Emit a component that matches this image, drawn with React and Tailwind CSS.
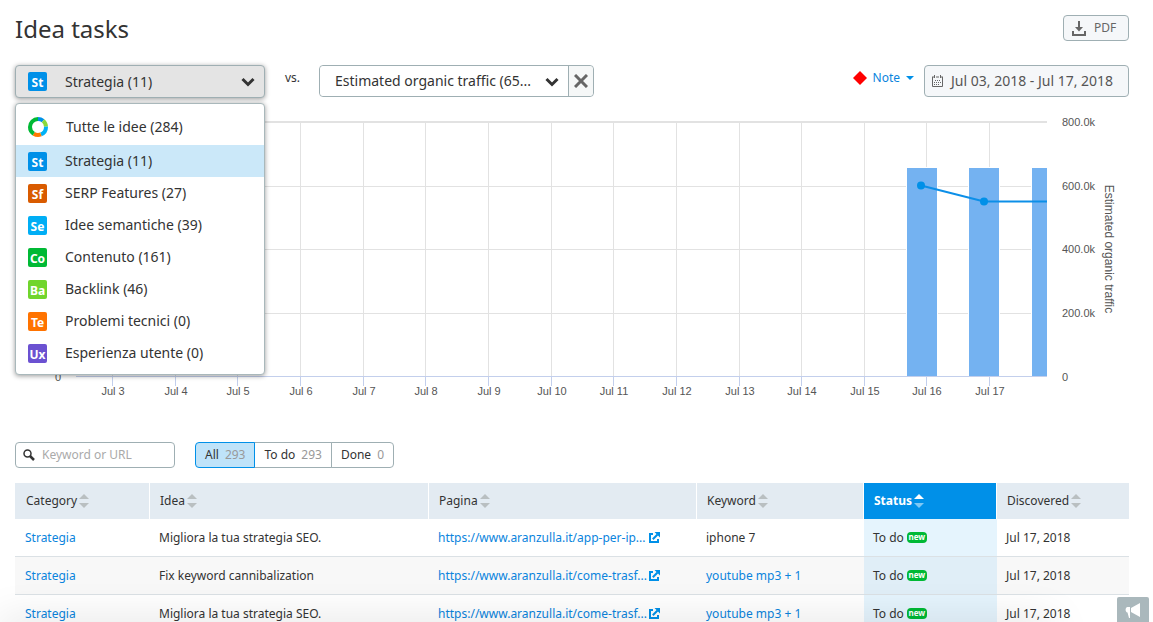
import React, { useState } from "react";

const categories = [
    { code: "St", label: "Strategia (11)", color: "bg-[#0090e8]" },
    { code: "Sf", label: "SERP Features (27)", color: "bg-[#d95b00]" },
    { code: "Se", label: "Idee semantiche (39)", color: "bg-[#00aef5]" },
    { code: "Co", label: "Contenuto (161)", color: "bg-[#00b935]" },
    { code: "Ba", label: "Backlink (46)", color: "bg-[#70d52c]" },
    { code: "Te", label: "Problemi tecnici (0)", color: "bg-[#ff7300]" },
    { code: "Ux", label: "Esperienza utente (0)", color: "bg-[#6b51d1]" },
];

const filters = [
    { label: "All", count: 293 },
    { label: "To do", count: 293 },
    { label: "Done", count: 0 },
];

const columns = [
    { label: "Category", width: "w-[135px]" },
    { label: "Idea", width: "w-[279px]" },
    { label: "Pagina", width: "" },
    { label: "Keyword", width: "w-[167px]" },
    { label: "Status", width: "w-[133px]" },
    { label: "Discovered", width: "w-[132px]" },
];

const rows = [
    { idea: "Migliora la tua strategia SEO.", page: "https://www.aranzulla.it/app-per-ip...", keyword: "iphone 7", link: false },
    { idea: "Fix keyword cannibalization", page: "https://www.aranzulla.it/come-trasf...", keyword: "youtube mp3 + 1", link: true },
    { idea: "Migliora la tua strategia SEO.", page: "https://www.aranzulla.it/come-trasf...", keyword: "youtube mp3 + 1", link: true },
];

const ringParts = [
    { from: 0, size: 11, color: "#0090e8" },
    { from: 11, size: 13, color: "#8ad93c" },
    { from: 24, size: 20, color: "#00b2f6" },
    { from: 44, size: 15, color: "#ff7a00" },
    { from: 59, size: 41, color: "#00b935" },
];

const Badge = ({ code, color }) => (
    <span className={`flex h-[19px] w-[19px] shrink-0 items-end justify-center rounded-xs text-xs leading-4 font-bold text-white ${color}`}>
        {code}
    </span>
);

const Ring = () => (
    <svg width="20" height="20" viewBox="0 0 20 20" className="shrink-0" aria-hidden="true">
        {ringParts.map((part) => (
            <circle
                key={part.color}
                cx="10"
                cy="10"
                r="8"
                fill="none"
                stroke={part.color}
                strokeWidth="4"
                pathLength="100"
                strokeDasharray={`${part.size} ${100 - part.size}`}
                strokeDashoffset={-part.from}
                transform="rotate(-90 10 10)"
            />
        ))}
    </svg>
);

const Chevron = ({ className = "" }) => (
    <svg width="14" height="10" viewBox="0 0 14 10" className={className} aria-hidden="true">
        <path d="M1.5 2 7 7.5 12.5 2" fill="none" stroke="#333" strokeWidth="3" />
    </svg>
);

const SortArrows = ({ active }) => (
    <svg width="10" height="14" viewBox="0 0 10 14" className={active ? "text-white" : "text-[#b9bfc1]"} aria-hidden="true">
        <path d="M0 5 5 0l5 5z" fill="currentColor" />
        <path d="M0 9h10l-5 5z" fill="currentColor" opacity={active ? 0.5 : 1} />
    </svg>
);

const ExternalIcon = () => (
    <svg width="11" height="11" viewBox="0 0 11 11" className="shrink-0" aria-hidden="true">
        <path d="M4 2H1v8h8V7" fill="none" stroke="#0090e8" strokeWidth="2" />
        <path d="M3.8 7.2 8.5 2.5" stroke="#0090e8" strokeWidth="2" />
        <path d="M5.5 0H11v5.5z" fill="#0090e8" />
    </svg>
);

const CategoryPicker = () => {
    const [open, setOpen] = useState(true);
    const [selected, setSelected] = useState(categories[0]);

    return (
        <div className="relative w-[250px] text-sm text-[#333]">
            <button
                type="button"
                aria-haspopup="listbox"
                aria-expanded={open}
                onClick={() => setOpen(!open)}
                className="flex h-[33px] w-full items-center rounded border border-[#9fafb3] bg-[#e4e4e4] px-3 shadow-[0_1px_5px_rgba(0,0,0,0.4)]"
            >
                <Badge code={selected.code} color={selected.color} />
                <span className="ml-[18px]">{selected.label}</span>
                <Chevron className="mr-[-3px] ml-auto" />
            </button>
            {open && (
                <ul
                    role="listbox"
                    aria-label="Category"
                    className="absolute top-[38px] left-0 z-10 w-full rounded-sm border border-[#a9b8bb] bg-white py-[5px] shadow-[0_1px_5px_rgba(0,0,0,0.4)]"
                >
                    <li role="option" aria-selected="false" className="flex h-9 items-center gap-[18px] px-3">
                        <Ring />
                        Tutte le idee (284)
                    </li>
                    {categories.map((item) => (
                        <li
                            key={item.code}
                            role="option"
                            aria-selected={item.code === selected.code}
                            onClick={() => setSelected(item)}
                            className={`flex h-8 cursor-pointer items-center gap-[18px] px-3 ${item.code === selected.code ? "bg-[#cbe8f9]" : ""}`}
                        >
                            <Badge code={item.code} color={item.color} />
                            {item.label}
                        </li>
                    ))}
                </ul>
            )}
        </div>
    );
};

const Chart = () => {
    const days = Array.from({ length: 15 }, (_, i) => ({ x: Math.round(97 + i * 62.65), label: `Jul ${i + 3}` }));

    return (
        <svg viewBox="0 0 1114 290" className="block w-full" fontFamily="Liberation Sans, Arial, sans-serif" fontSize="11" fill="#555">
            <g shapeRendering="crispEdges">
                <path d="M61 12h971" stroke="#e2e2e2" strokeWidth="2" />
                {[76, 139, 203].map((y) => (
                    <path key={y} d={`M61 ${y}.5h971`} stroke="#e2e2e2" />
                ))}
                {days.map((day) => (
                    <path key={day.label} d={`M${day.x}.5 12v255`} stroke="#e2e2e2" />
                ))}
                <path d="M891 57h32v210h-32zM953 57h32v210h-32zM1016 57h16v210h-16z" fill="#fff" />
                <path d="M892 58h30v209h-30zM954 58h30v209h-30zM1017 58h15v209h-15z" fill="#74b2f1" />
                <path d="M61 266.5h971" stroke="#c3cfec" />
                {days.map((day) => (
                    <path key={day.label} d={`M${day.x}.5 267v9`} stroke="#c3cfec" />
                ))}
            </g>
            <path d="m906 75.5 63 16h63" fill="none" stroke="#0c8fe8" strokeWidth="2" />
            <circle cx="906" cy="75.5" r="4" fill="#0090e8" />
            <circle cx="969" cy="91.5" r="4" fill="#0090e8" />
            {days.map((day) => (
                <text key={day.label} x={day.x + 1} y="285" textAnchor="middle">
                    {day.label}
                </text>
            ))}
            {["800.0k", "600.0k", "400.0k", "200.0k", "0"].map((label, i) => (
                <text key={label} x="1047" y={16 + i * 64 - (i > 1 ? 1 : 0)}>
                    {label}
                </text>
            ))}
            <text x="40" y="271">0</text>
            <text transform="translate(1090 139) rotate(90)" textAnchor="middle" fontSize="12">
                Estimated organic traffic
            </text>
        </svg>
    );
};

const IdeasTable = () => (
    <table className="w-full table-fixed border-separate border-spacing-0 text-left text-xs text-[#333]">
        <thead>
            <tr className="h-9 bg-[#e3ebf2]">
                {columns.map((col) => {
                    const active = col.label === "Status";
                    return (
                        <th
                            key={col.label}
                            scope="col"
                            aria-sort={active ? "ascending" : "none"}
                            className={`border-r border-white p-0 pl-[10px] first:pl-[11px] last:border-r-0 ${col.width} ${active ? "bg-[#0090e8] font-bold text-white" : "font-normal"}`}
                        >
                            <button type="button" className="flex items-center gap-[2px]">
                                {col.label}
                                <SortArrows active={active} />
                            </button>
                        </th>
                    );
                })}
            </tr>
        </thead>
        <tbody>
            {rows.map((row, index) => (
                <tr key={index} className="h-[38px] *:border-b *:border-[#dbe1e5] *:p-0 *:pl-[9px] *:first:pl-[10px] even:bg-[#f8f8f8]">
                    <td>
                        <a href="#strategia" className="text-[#0a84dd]">Strategia</a>
                    </td>
                    <td>{row.idea}</td>
                    <td>
                        <a href="#pagina" className="flex items-center text-[#0a84dd]">
                            <span className="w-[211px] truncate">{row.page}</span>
                            <ExternalIcon />
                        </a>
                    </td>
                    <td>
                        {row.link ? <a href="#keyword" className="text-[#0a84dd]">{row.keyword}</a> : row.keyword}
                    </td>
                    <td className={index % 2 ? "bg-[#e0eef7]" : "bg-[#e5f4fd]"}>
                        <span className="flex items-center gap-[3px]">
                            To do
                            <span className="flex h-[11px] w-5 items-center justify-center rounded bg-[#00b935] pb-px text-[8px] leading-none font-bold text-white">
                                new
                            </span>
                        </span>
                    </td>
                    <td>Jul 17, 2018</td>
                </tr>
            ))}
        </tbody>
    </table>
);

const App = () => {
    const [filter, setFilter] = useState("All");

    return (
        <div className="relative h-screen overflow-hidden bg-white pt-[15px] pr-6 pl-[15px] font-['Noto_Sans',sans-serif] text-[#333]">
            <header className="flex h-[50px] items-start justify-between">
                <h1 className="text-2xl leading-7">Idea tasks</h1>
                <button type="button" className="flex h-[26px] w-[66px] items-center gap-2 rounded-sm border border-[#9fafb3] bg-[#f5f7f9] pl-2 text-xs text-[#666]">
                    <svg width="14" height="15" viewBox="0 0 14 15" fill="none" stroke="#666" strokeWidth="2" aria-hidden="true">
                        <path d="M7 0v8M1 10v4h12v-4" />
                        <path d="M3 6h8l-4 4.5z" fill="#666" stroke="none" />
                    </svg>
                    PDF
                </button>
            </header>

            <div className="flex h-[45px] items-start">
                <CategoryPicker />
                <span className="mx-5 w-[14px] text-xs leading-[26px]">vs.</span>
                <div className="flex h-8 rounded border border-[#9fafb3] text-sm">
                    <div className="relative flex">
                        <select aria-label="Compare with" className="w-[248px] appearance-none rounded-l bg-white pr-9 pl-[15px] text-ellipsis">
                            <option>Estimated organic traffic (65...</option>
                        </select>
                        <Chevron className="pointer-events-none absolute top-[11px] right-[9px]" />
                    </div>
                    <button type="button" aria-label="Remove comparison" className="flex w-[25px] items-center justify-center rounded-r border-l border-[#9fafb3] bg-[#f5f7f7]">
                        <svg width="14" height="14" viewBox="0 0 14 14" stroke="#666" strokeWidth="3" aria-hidden="true">
                            <path d="m1 1 12 12M13 1 1 13" />
                        </svg>
                    </button>
                </div>
                <button type="button" className="ml-auto flex h-[26px] items-center text-xs text-[#0a84dd]">
                    <svg width="14" height="14" viewBox="0 0 14 14" className="mr-[6px]" aria-hidden="true">
                        <path d="m7 0 7 7-7 7-7-7z" fill="red" />
                    </svg>
                    Note
                    <svg width="8" height="5" viewBox="0 0 8 5" className="ml-[6px]" aria-hidden="true">
                        <path d="M0 0h8L4 4z" fill="#0090e8" />
                    </svg>
                </button>
                <button type="button" className="ml-[10px] flex h-8 w-[205px] items-center gap-2 rounded border border-[#9fafb3] bg-[#f5f7f9] pl-[7px] text-sm whitespace-nowrap text-[#555]">
                    <svg width="11" height="12" viewBox="0 0 11 12" fill="none" stroke="#666" className="shrink-0" aria-hidden="true">
                        <path d="M.5 2v9.5h10V2" />
                        <path d="M0 2h2M4 2h3M9 2h2M2.5 0v3M8.5 0v3" />
                        <path d="M3 5.5h6M2 7.5h7M2 9.5h5" strokeDasharray="1 1" />
                    </svg>
                    Jul 03, 2018 - Jul 17, 2018
                </button>
            </div>

            <Chart />

            <div className="mt-[42px] mb-[15px] flex h-[26px] gap-5 text-xs">
                <label className="flex w-40 items-center rounded-sm border border-[#9fafb3] pl-[7px]">
                    <svg width="12" height="12" viewBox="0 0 12 12" fill="none" stroke="#333" className="shrink-0" aria-hidden="true">
                        <circle cx="4.5" cy="4.5" r="3.5" strokeWidth="1.5" />
                        <path d="m7 7 4 4" strokeWidth="2.5" />
                    </svg>
                    <input type="text" aria-label="Keyword or URL" placeholder="Keyword or URL" className="ml-[7px] w-full min-w-0 outline-none placeholder:text-[#aaa]" />
                </label>
                <div className="flex">
                    {filters.map((item) => (
                        <button
                            key={item.label}
                            type="button"
                            aria-pressed={filter === item.label}
                            onClick={() => setFilter(item.label)}
                            className={`-ml-px flex items-center gap-[6px] border px-[9px] first:ml-0 first:rounded-l-sm last:rounded-r-sm ${filter === item.label ? "z-1 border-[#0090e8] bg-[#bfe3f9]" : "border-[#9fafb3] bg-white"}`}
                        >
                            {item.label}
                            <span className="text-[#999]">{item.count}</span>
                        </button>
                    ))}
                </div>
            </div>

            <IdeasTable />

            {/* soft shade along the window's lower edge */}
            <div className="pointer-events-none absolute top-full right-[100px] left-0 h-5 shadow-[0_0_40px_rgba(0,0,0,0.15)]" />
            <button type="button" aria-label="Feedback" className="absolute right-1 bottom-0 flex h-[25px] w-8 items-center justify-center rounded-t-xs bg-[#aab8bc]">
                <svg width="16" height="16" viewBox="0 0 16 16" fill="#fff" aria-hidden="true">
                    <path d="M15 1v14l-9-5V6zM5 5v11H4l-1.500-5.500C0 10 0 5.500 2.500 5z" />
                </svg>
            </button>
        </div>
    );
};

export default App;
